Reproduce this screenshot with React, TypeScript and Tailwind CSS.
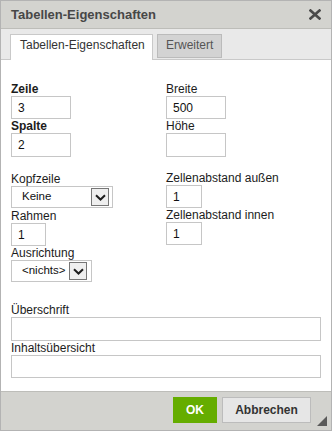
import React from "react";

const Label = ({ children, bold }: { children: React.ReactNode; bold?: boolean }) => (
  <div className={`text-[12px] leading-[14px] text-[#1c1c1c] ${bold ? "font-bold" : ""}`}>{children}</div>
);

const TextBox = ({ value = "", className = "" }: { value?: string; className?: string }) => (
  <input
    readOnly
    value={value}
    className={`block border border-[#c6c6c6] bg-white px-[6px] text-[12px] text-[#111] outline-none ${className}`}
  />
);

const Select = ({ value, className = "" }: { value: string; className?: string }) => (
  <div
    className={`flex items-center justify-between h-[22px] border border-[#c6c6c6] bg-white pl-[10px] pr-[3px] ${className}`}
  >
    <span className="text-[11.5px] leading-none text-[#111]">{value}</span>
    <span className="flex items-center justify-center w-[18px] h-[18px] border border-[#767676] bg-[#efefef]">
      <svg width="11" height="7" viewBox="0 0 11 7">
        <path d="M1 1.2 L5.5 5.5 L10 1.2" fill="none" stroke="#1e1e1e" strokeWidth="2" />
      </svg>
    </span>
  </div>
);

export default function App() {
  return (
    <div className="w-[332px] h-[431px] flex flex-col border border-[#b3b3b3] bg-white font-['Liberation_Sans',Arial,sans-serif]">
      {/* Title bar */}
      <div className="h-[28px] shrink-0 flex items-center justify-between pl-[10px] pr-[10px] bg-[#d3d3cf] border-b border-[#bdbdb9]">
        <span className="text-[13px] font-bold text-[#474747]">Tabellen-Eigenschaften</span>
        <svg width="12" height="11" viewBox="0 0 12 11">
          <path d="M1.5 1.5 L10.5 9.5 M10.5 1.5 L1.5 9.5" stroke="#4a4a4a" strokeWidth="2.6" strokeLinecap="square" />
        </svg>
      </div>

      {/* Tabs */}
      <div className="h-[31px] shrink-0 flex items-start gap-[4px] pt-[5px] pl-[9px] bg-[#e9e9e9] border-b border-[#c9c9c9]">
        <div className="w-[143px] h-[26px] bg-white border border-b-0 border-[#c9c9c9] pl-[9px] pt-[4px] text-[12px] leading-[13px] text-[#333]">
          Tabellen-Eigenschaften
        </div>
        <div className="h-[24px] bg-[#d3d3d3] border border-[#bbbbbb] px-[8px] pt-[4px] text-[12px] leading-[13px] text-[#555]">
          Erweitert
        </div>
      </div>

      {/* Content */}
      <div className="flex-1 flex flex-col pl-[10px] pr-[10px] pt-[22px]">
        <div className="grid grid-cols-[155px_1fr]">
          <div className="flex flex-col">
            <Label bold>Zeile</Label>
            <TextBox value="3" className="w-[60px] h-[23px]" />
            <Label bold>Spalte</Label>
            <TextBox value="2" className="w-[60px] h-[24px]" />
          </div>
          <div className="flex flex-col">
            <Label>Breite</Label>
            <TextBox value="500" className="w-[60px] h-[23px]" />
            <Label>Höhe</Label>
            <TextBox className="w-[60px] h-[24px]" />
          </div>
        </div>

        <div className="grid grid-cols-[155px_1fr] mt-[14px]">
          <div className="flex flex-col pt-[1px]">
            <Label>Kopfzeile</Label>
            <Select value="Keine" className="w-[102px] mb-[1px]" />
            <Label>Rahmen</Label>
            <TextBox value="1" className="w-[35px] h-[23px]" />
            <Label>Ausrichtung</Label>
            <Select value="<nichts>" className="w-[81px] pr-[4px]" />
          </div>
          <div className="flex flex-col">
            <Label>Zellenabstand außen</Label>
            <TextBox value="1" className="w-[36px] h-[23px]" />
            <Label>Zellenabstand innen</Label>
            <TextBox value="1" className="w-[36px] h-[23px]" />
          </div>
        </div>

        <div className="flex flex-col mt-[21px]">
          <Label>Überschrift</Label>
          <TextBox className="w-full h-[24px]" />
          <Label>Inhaltsübersicht</Label>
          <TextBox className="w-full h-[23px]" />
        </div>
      </div>

      {/* Footer */}
      <div className="relative h-[39px] shrink-0 flex items-start justify-end gap-[5px] pt-[5px] pr-[20px] bg-[#d3d3cf] border-t border-[#bdbdb9]">
        <button className="w-[44px] h-[26px] bg-[#65ad00] text-white text-[12px] font-bold">OK</button>
        <button className="w-[89px] h-[26px] bg-[#e6e6e6] border border-[#bcbcbc] text-[#333] text-[12px] font-bold">
          Abbrechen
        </button>
        <svg className="absolute right-[4px] bottom-[4px]" width="10" height="10" viewBox="0 0 10 10">
          <path d="M10 0 L10 10 L0 10 Z" fill="#5a5a5a" />
        </svg>
      </div>
    </div>
  );
}
